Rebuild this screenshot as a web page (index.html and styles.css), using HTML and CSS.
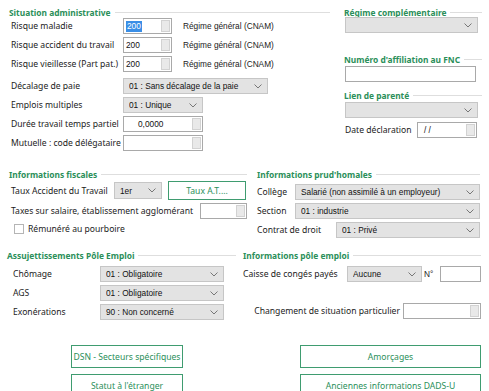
FILE: index.html
```html
<!DOCTYPE html>
<html>

<head>
    <title>Situation administrative</title>
    <link rel="stylesheet" href="styles.css">
</head>

<body>
    <div class="form">
        <div class="band band-top">
            <div class="col col-admin">
                <div class="legend"><span>Situation administrative</span></div>
                <div class="line first">
                    <label>Risque maladie</label>
                    <div class="edit w49"><span class="val"><span class="hl">200</span></span><span class="dots"></span></div>
                    <span class="note">Régime général (CNAM)</span>
                </div>
                <div class="line">
                    <label>Risque accident du travail</label>
                    <div class="edit w49"><span class="val">200</span><span class="dots"></span></div>
                    <span class="note">Régime général (CNAM)</span>
                </div>
                <div class="line">
                    <label>Risque vieillesse (Part pat.)</label>
                    <div class="edit w49"><span class="val">200</span><span class="dots"></span></div>
                    <span class="note">Régime général (CNAM)</span>
                </div>
                <div class="line spaced">
                    <label>Décalage de paie</label>
                    <div class="combo w145"><span>01 : Sans décalage de la paie</span><svg class="chev" viewBox="0 0 8 5"><path d="M.5 .5 4 4 7.5 .5" /></svg></div>
                </div>
                <div class="line">
                    <label>Emplois multiples</label>
                    <div class="combo w80"><span>01 : Unique</span><svg class="chev" viewBox="0 0 8 5"><path d="M.5 .5 4 4 7.5 .5" /></svg></div>
                </div>
                <div class="line">
                    <label>Durée travail temps partiel</label>
                    <div class="edit w80"><span class="val num">0,0000</span><span class="dots"></span></div>
                </div>
                <div class="line">
                    <label>Mutuelle : code délégataire</label>
                    <div class="edit w80"><span class="val"></span><span class="dots"></span></div>
                </div>
            </div>

            <div class="col col-side">
                <div class="legend"><span>Régime complémentaire</span></div>
                <div class="combo w133 tight"><span></span><svg class="chev" viewBox="0 0 8 5"><path d="M.5 .5 4 4 7.5 .5" /></svg></div>

                <div class="legend fnc"><span>Numéro d'affiliation au FNC</span></div>
                <div class="edit w131 tight"><span class="val"></span></div>

                <div class="legend lien"><span>Lien de parenté</span></div>
                <div class="combo w133 tight"><span></span><svg class="chev" viewBox="0 0 8 5"><path d="M.5 .5 4 4 7.5 .5" /></svg></div>

                <div class="line date">
                    <label>Date déclaration</label>
                    <div class="edit w60"><span class="val slash">/ /</span><span class="dots"></span></div>
                </div>
            </div>
        </div>

        <div class="band band-mid">
            <div class="col col-fisc">
                <div class="legend"><span>Informations fiscales</span></div>
                <div class="line taux">
                    <label>Taux Accident du Travail</label>
                    <div class="combo w48 h17"><span>1er</span><svg class="chev" viewBox="0 0 8 5"><path d="M.5 .5 4 4 7.5 .5" /></svg></div>
                    <button class="btn btn-taux">Taux A.T....</button>
                </div>
                <div class="line taxes">
                    <label>Taxes sur salaire, établissement agglomérant</label>
                    <div class="edit w47"><span class="val"></span><span class="dots"></span></div>
                </div>
                <div class="line check">
                    <span class="box"></span>
                    <label>Rémunéré au pourboire</label>
                </div>
            </div>

            <div class="col col-prud">
                <div class="legend"><span>Informations prud'homales</span></div>
                <div class="line college">
                    <label>Collège</label>
                    <div class="combo grow"><span>Salarié (non assimilé à un employeur)</span><svg class="chev" viewBox="0 0 8 5"><path d="M.5 .5 4 4 7.5 .5" /></svg></div>
                </div>
                <div class="line section">
                    <label>Section</label>
                    <div class="combo grow"><span>01 : industrie</span><svg class="chev" viewBox="0 0 8 5"><path d="M.5 .5 4 4 7.5 .5" /></svg></div>
                </div>
                <div class="line contrat">
                    <label>Contrat de droit</label>
                    <div class="combo grow"><span>01 : Privé</span><svg class="chev" viewBox="0 0 8 5"><path d="M.5 .5 4 4 7.5 .5" /></svg></div>
                </div>
            </div>
        </div>

        <div class="band band-low">
            <div class="col col-assuj">
                <div class="legend"><span>Assujettissements Pôle Emploi</span></div>
                <div class="line first-low">
                    <label>Chômage</label>
                    <div class="combo w124"><span>01 : Obligatoire</span><svg class="chev" viewBox="0 0 8 5"><path d="M.5 .5 4 4 7.5 .5" /></svg></div>
                </div>
                <div class="line">
                    <label>AGS</label>
                    <div class="combo w124"><span>01 : Obligatoire</span><svg class="chev" viewBox="0 0 8 5"><path d="M.5 .5 4 4 7.5 .5" /></svg></div>
                </div>
                <div class="line">
                    <label>Exonérations</label>
                    <div class="combo w124"><span>90 : Non concerné</span><svg class="chev" viewBox="0 0 8 5"><path d="M.5 .5 4 4 7.5 .5" /></svg></div>
                </div>
            </div>

            <div class="col col-pole">
                <div class="legend"><span>Informations pôle emploi</span></div>
                <div class="line first-low">
                    <label>Caisse de congés payés</label>
                    <div class="combo w75"><span>Aucune</span><svg class="chev" viewBox="0 0 8 5"><path d="M.5 .5 4 4 7.5 .5" /></svg></div>
                    <span class="numero">N°</span>
                    <div class="edit w41"><span class="val"></span></div>
                </div>
                <div class="line changement">
                    <label>Changement de situation particulier</label>
                    <div class="edit w78"><span class="val"></span><span class="dots"></span></div>
                </div>
            </div>
        </div>

        <div class="band band-btns">
            <div class="btn-col btn-left">
                <button class="btn">DSN - Secteurs spécifiques</button>
                <button class="btn">Statut à l'étranger</button>
            </div>
            <div class="btn-col btn-right">
                <button class="btn">Amorçages</button>
                <button class="btn">Anciennes informations DADS-U</button>
            </div>
        </div>
    </div>
</body>

</html>
```

FILE: styles.css
```css
body {
    margin: 0px;
    background-color: white;
    font-family: 'Noto Sans', sans-serif;
    font-size: 8.6px;
    color: #1b1b1b;
    width: 489px;
    height: 391px;
    overflow: hidden;
}

.form {
    padding-top: 6px;
}

.band {
    display: flex;
    align-items: flex-start;
}

.col {
    display: flex;
    flex-direction: column;
}

/* group titles with the thin rule after them */
.legend {
    display: flex;
    align-items: center;
    height: 12px;
    font-size: 8.4px;
    font-weight: bold;
    color: #2b8f5a;
    white-space: nowrap;
}

.legend::after {
    content: "";
    flex: 1;
    height: 1px;
    background-color: #dedede;
    margin-left: 4px;
}

.line {
    display: flex;
    align-items: center;
    height: 16px;
    margin-top: 3px;
    white-space: nowrap;
}

.line label {
    flex-shrink: 0;
}

/* fields */
.edit {
    display: flex;
    box-sizing: border-box;
    height: 16px;
    border: 1px solid #a9a9a9;
    background-color: white;
    font-family: 'Liberation Sans', sans-serif;
    font-size: 8.3px;
    color: #111;
}

.edit .val {
    flex: 1;
    display: flex;
    align-items: center;
    padding-left: 2px;
}

.edit .hl {
    background-color: #3a8ee6;
    color: white;
    padding: 0px 1px;
    line-height: 11px;
}

.edit .num {
    padding-left: 14px;
}

.edit .slash {
    padding-left: 6px;
}

.dots {
    width: 9px;
    margin: 1px;
    background-color: #e9e9e9;
    border: 1px solid #d2d2d2;
    box-sizing: border-box;
}

.combo {
    display: flex;
    align-items: center;
    box-sizing: border-box;
    height: 16px;
    padding: 0px 5px 0px 5px;
    background-color: #e3e3e3;
    border: 1px solid #c6c6c6;
    font-family: 'Liberation Sans', sans-serif;
    font-size: 8.3px;
    color: #111;
}

.combo span {
    flex: 1;
    overflow: hidden;
}

.chev {
    width: 8px;
    height: 5px;
    fill: none;
    stroke: #777;
    stroke-width: 1;
}

.combo.h17 {
    height: 17px;
}

.combo.grow {
    flex: 1;
}

.w41 { width: 41px; }
.w47 { width: 47px; }
.w48 { width: 48px; }
.w49 { width: 49px; }
.w60 { width: 60px; }
.w75 { width: 75px; }
.w78 { width: 78px; }
.w80 { width: 80px; }
.w124 { width: 124px; }
.w131 { width: 131px; }
.w133 { width: 133px; }
.w145 { width: 145px; }

.btn {
    box-sizing: border-box;
    height: 23px;
    background-color: white;
    border: 1px solid #3f9c70;
    color: #2b8f5a;
    font-family: 'Noto Sans', sans-serif;
    font-size: 8.6px;
    padding: 0px;
    white-space: nowrap;
}

/* top band */
.col-admin {
    margin-left: 9px;
    width: 321px;
}

.col-admin .line {
    padding-left: 2px;
}

.col-admin .line label {
    width: 112px;
}

.col-admin .line.first {
    margin-top: 0px;
}

.col-admin .line.spaced {
    margin-top: 6px;
}

.note {
    margin-left: 11px;
    font-family: 'Liberation Sans', sans-serif;
    font-size: 8.3px;
}

.col-side {
    margin-left: 14px;
    width: 138px;
}

.tight {
    margin-left: 1px;
    margin-top: -1px;
}

.col-side .legend.fnc {
    margin-top: 20px;
}

.col-side .edit.tight,
.col-side .legend.lien + .combo {
    margin-top: 1px;
}

.col-side .legend.lien {
    margin-top: 7px;
}

.col-side .line.date {
    margin-top: 4px;
    padding-left: 1px;
}

.col-side .line.date label {
    width: 72px;
}

/* middle band */
.band-mid {
    margin-top: 17px;
}

.col-fisc {
    margin-left: 9px;
    width: 238px;
}

.col-fisc .line {
    padding-left: 2px;
}

.line.taux {
    height: 19px;
    margin-top: 1px;
}

.line.taux label {
    width: 103px;
}

.btn-taux {
    width: 78px;
    height: 19px;
    margin-left: 6px;
}

.line.taxes {
    margin-top: 3px;
}

.line.taxes label {
    flex: 1;
}

.line.check {
    margin-top: 2px;
}

.box {
    width: 10px;
    height: 10px;
    box-sizing: border-box;
    border: 1px solid #b5b5b5;
    background-color: white;
    margin-left: 3px;
    margin-right: 4px;
}

.col-prud {
    margin-left: 10px;
    width: 223px;
}

.col-prud .line label {
    width: 38px;
}

.col-prud .line.college {
    margin-top: 4px;
}

.col-prud .line.contrat label {
    width: 79px;
}

/* lower band */
.band-low {
    margin-top: 11px;
}

.col-assuj {
    margin-left: 7px;
    width: 229px;
}

.col-assuj .line {
    padding-left: 6px;
}

.col-assuj .line label {
    width: 87px;
}

.line.first-low {
    margin-top: 5px;
}

.col-pole {
    margin-left: 7px;
    width: 238px;
}

.col-pole .line.first-low label {
    width: 104px;
}

.numero {
    width: 16px;
    margin-left: 2px;
    font-family: 'Liberation Sans', sans-serif;
    font-size: 8.3px;
}

.line.changement {
    margin-top: 21px;
    justify-content: flex-end;
}

.line.changement label {
    margin-right: 3px;
}

/* buttons at the bottom */
.band-btns {
    margin-top: 25px;
}

.btn-col {
    display: flex;
    flex-direction: column;
    gap: 6px;
}

.btn-left {
    margin-left: 71px;
    width: 112px;
}

.btn-right {
    margin-left: 117px;
    width: 181px;
}
```
